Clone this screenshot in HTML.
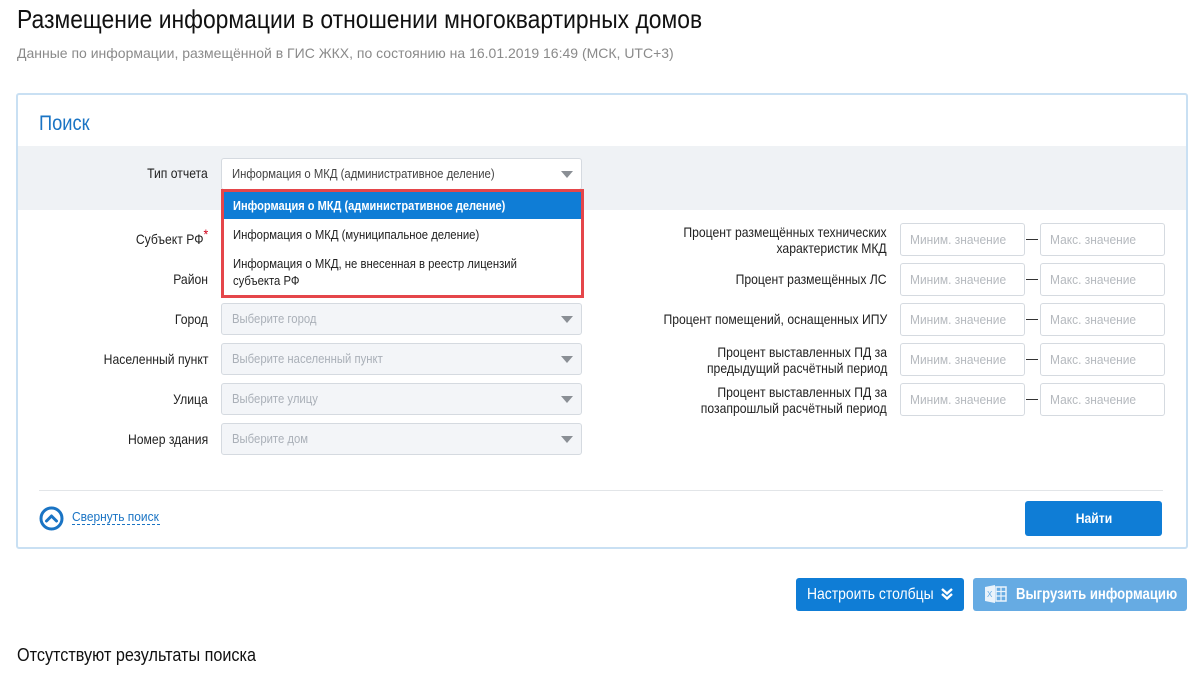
<!DOCTYPE html>
<html><head><meta charset="utf-8"><style>
*{box-sizing:border-box;margin:0;padding:0}
body{width:1199px;height:676px;background:#fff;position:relative;overflow:hidden;font-family:"Liberation Sans",sans-serif;color:#222}
.a{position:absolute;white-space:nowrap}
.c{display:inline-block;transform:scaleX(.87);transform-origin:left center;white-space:nowrap}
.r{display:inline-block;transform:scaleX(.87);transform-origin:right center;white-space:nowrap}
.lbl{position:absolute;white-space:nowrap;text-align:right;font-size:14px;color:#222;line-height:16px}
.sel{position:absolute;left:221px;width:361px;height:32px;border:1px solid #d5dae0;border-radius:3px;background:#f3f5f8;font-size:13px;color:#aab0b8;padding:8px 10px;line-height:14px}
.sel:after{content:"";position:absolute;right:8px;top:12px;border-left:6px solid transparent;border-right:6px solid transparent;border-top:7px solid #8a8f95}
.inp{position:absolute;width:125px;height:33px;border:1px solid #d5dae0;border-radius:3px;background:#fff;font-size:13px;color:#b5b9be;padding:9px 9px;line-height:14px}
.inp span{display:inline-block;transform:scaleX(.92);transform-origin:left center}
.dash{position:absolute;left:1026px;width:12px;height:1px;background:#333}
</style></head><body>
<div class="a" style="left:17px;top:4px;font-size:26px;color:#111"><span class="c" style="transform:scaleX(.88)">Размещение информации в отношении многоквартирных домов</span></div>
<div class="a" style="left:17px;top:45px;font-size:14px;color:#8a8a8a">Данные по информации, размещённой в ГИС ЖКХ, по состоянию на 16.01.2019 16:49 (МСК, UTC+3)</div>

<div class="a" style="left:16px;top:93px;width:1172px;height:456px;border:2px solid #c9e0f3;border-radius:3px"></div>
<div class="a" style="left:39px;top:112px;font-size:21px;color:#1a74c4"><span class="c">Поиск</span></div>
<div class="a" style="left:18px;top:146px;width:1168px;height:64px;background:#eff2f5"></div>

<div class="lbl" style="right:991px;top:165px"><span class="r">Тип отчета</span></div>
<div class="sel" style="top:158px;background:#fff;color:#444"><span class="c">Информация о МКД (административное деление)</span></div>

<div class="a" style="left:221px;top:189px;width:363px;height:109px;border:3px solid #e5464a;background:#fff">
 <div style="height:27px;background:#0f7dd6;color:#fff;font-size:13px;font-weight:bold;padding:6px 9px"><span class="c" style="transform:scaleX(.85)">Информация о МКД (административное деление)</span></div>
 <div style="font-size:13px;color:#222;padding:8px 9px 0"><span class="c">Информация о МКД (муниципальное деление)</span></div>
 <div style="font-size:13px;color:#222;padding:13px 9px 0;line-height:17px"><span class="c">Информация о МКД, не внесенная в реестр лицензий</span><br><span class="c">субъекта РФ</span></div>
</div>

<div class="lbl" style="right:991px;top:231px"><span class="r">Субъект РФ<span style="color:#d0021b;position:relative;top:-5px;font-size:14px">*</span></span></div>
<div class="lbl" style="right:991px;top:271px"><span class="r">Район</span></div>
<div class="lbl" style="right:991px;top:311px"><span class="r">Город</span></div>
<div class="sel" style="top:303px"><span class="c">Выберите город</span></div>
<div class="lbl" style="right:991px;top:351px"><span class="r">Населенный пункт</span></div>
<div class="sel" style="top:343px"><span class="c">Выберите населенный пункт</span></div>
<div class="lbl" style="right:991px;top:391px"><span class="r">Улица</span></div>
<div class="sel" style="top:383px"><span class="c">Выберите улицу</span></div>
<div class="lbl" style="right:991px;top:431px"><span class="r">Номер здания</span></div>
<div class="sel" style="top:423px"><span class="c">Выберите дом</span></div>

<div class="lbl" style="right:312px;top:224px"><span class="r">Процент размещённых технических</span><br><span class="r">характеристик МКД</span></div>
<div class="inp" style="left:900px;top:223px"><span>Миним. значение</span></div><div class="dash" style="top:239px"></div><div class="inp" style="left:1040px;top:223px"><span>Макс. значение</span></div>
<div class="lbl" style="right:312px;top:271px"><span class="r">Процент размещённых ЛС</span></div>
<div class="inp" style="left:900px;top:263px"><span>Миним. значение</span></div><div class="dash" style="top:279px"></div><div class="inp" style="left:1040px;top:263px"><span>Макс. значение</span></div>
<div class="lbl" style="right:312px;top:311px"><span class="r">Процент помещений, оснащенных ИПУ</span></div>
<div class="inp" style="left:900px;top:303px"><span>Миним. значение</span></div><div class="dash" style="top:319px"></div><div class="inp" style="left:1040px;top:303px"><span>Макс. значение</span></div>
<div class="lbl" style="right:312px;top:344px"><span class="r">Процент выставленных ПД за</span><br><span class="r">предыдущий расчётный период</span></div>
<div class="inp" style="left:900px;top:343px"><span>Миним. значение</span></div><div class="dash" style="top:359px"></div><div class="inp" style="left:1040px;top:343px"><span>Макс. значение</span></div>
<div class="lbl" style="right:312px;top:384px"><span class="r">Процент выставленных ПД за</span><br><span class="r">позапрошлый расчётный период</span></div>
<div class="inp" style="left:900px;top:383px"><span>Миним. значение</span></div><div class="dash" style="top:399px"></div><div class="inp" style="left:1040px;top:383px"><span>Макс. значение</span></div>

<div class="a" style="left:39px;top:490px;width:1124px;height:1px;background:#e2e5e8"></div>
<svg class="a" style="left:39px;top:506px" width="25" height="25" viewBox="0 0 25 25"><circle cx="12.5" cy="12.5" r="10.5" fill="none" stroke="#1a74c4" stroke-width="3"/><path d="M7.5 15 L12.5 10 L17.5 15" fill="none" stroke="#1a74c4" stroke-width="3" stroke-linecap="round" stroke-linejoin="round"/></svg>
<div class="a" style="left:72px;top:509px;width:88px;font-size:13px;color:#1a74c4;border-bottom:1px dashed #1a74c4;line-height:15px"><span class="c" style="transform:scaleX(.92)">Свернуть поиск</span></div>
<div class="a" style="left:1025px;top:501px;width:137px;height:35px;background:#0f7dd6;border-radius:3px;color:#fff;font-size:14px;font-weight:bold;text-align:center;line-height:35px"><span style="display:inline-block;transform:scaleX(.87)">Найти</span></div>

<div class="a" style="left:796px;top:578px;width:168px;height:33px;background:#0f7dd6;border-radius:3px;color:#fff;font-size:16px;line-height:33px;padding-left:11px"><span class="c">Настроить столбцы</span></div>
<svg class="a" style="left:940px;top:587px" width="14" height="14" viewBox="0 0 14 14"><path d="M2 2 L7 6.5 L12 2 M2 7 L7 11.5 L12 7" fill="none" stroke="#fff" stroke-width="2.4" stroke-linejoin="miter"/></svg>
<div class="a" style="left:973px;top:578px;width:214px;height:33px;background:#66abe3;border-radius:3px;color:#fff;font-size:16px;font-weight:bold;line-height:33px;padding-left:43px"><span class="c" style="transform:scaleX(.82)">Выгрузить информацию</span></div>
<svg class="a" style="left:984px;top:584px" width="24" height="20" viewBox="0 0 24 20"><path d="M1 3 L11 1 L11 19 L1 17 Z" fill="#eaf3fb"/><text x="3" y="13" font-size="8" fill="#66abe3" font-family="Liberation Sans">X</text><rect x="12" y="3" width="10" height="14" fill="none" stroke="#eaf3fb" stroke-width="1.5"/><path d="M12 7.5H22M12 12H22M17 3V17" stroke="#eaf3fb" stroke-width="1.2"/></svg>

<div class="a" style="left:17px;top:645px;font-size:18px;color:#111"><span class="c" style="transform:scaleX(.9)">Отсутствуют результаты поиска</span></div>
</body></html>
